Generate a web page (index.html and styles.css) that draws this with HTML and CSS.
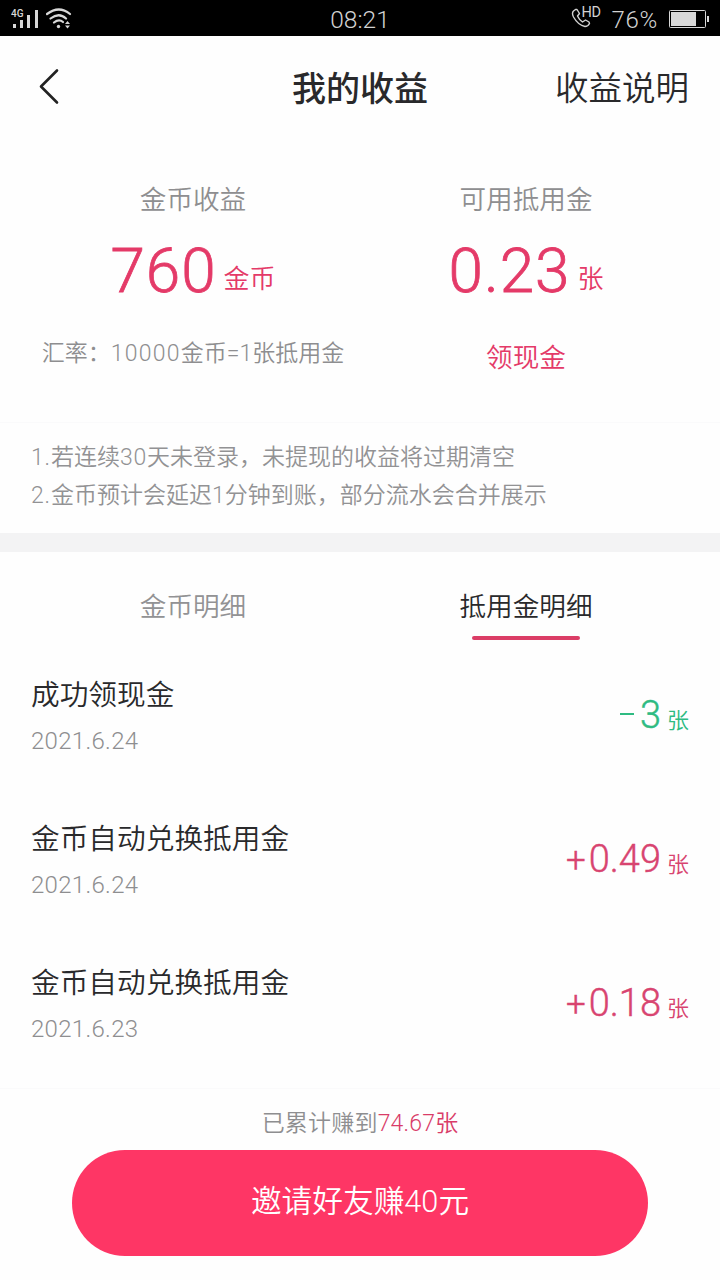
FILE: index.html
```html
<!DOCTYPE html>
<html lang="zh-CN">
<head>
<meta charset="utf-8">
<title>我的收益</title>
<link rel="stylesheet" href="styles.css">
</head>
<body>
<div class="status">
  <div class="status-left">
    <svg class="signal" width="28" height="22" viewBox="0 0 28 22"><text x="0" y="9" class="net">4G</text><path d="M2 16h3v4H2zM9 12h3v8H9zM16 7h3v13h-3zM24 2h3v18h-3z"/></svg>
    <svg width="26" height="22" viewBox="0 0 26 22"><g class="arcs"><path d="M1 6Q13-3 24 6M4.500 10.500Q13 4 20 10.500M8 14.500Q13 10.500 17 14"/></g><circle cx="12.500" cy="18.500" r="1.700"/><path d="M21.500 13l2.500 3h-5zM21.500 20.500l2.500-3h-5z"/></svg>
  </div>
  <div class="clock">08:21</div>
  <div class="status-right">
    <svg class="call" width="31" height="24" viewBox="0 0 31 24"><path d="M4.500 3.500L2.500 5Q.5 7 2.500 11Q7 19 14 20.500Q17 20.500 18.500 17.500L18 16L14.500 14L11.500 16Q8 13.500 6.500 10L8.500 7.500L6 3.500Z"/></svg>
    <span class="hd">HD</span>
    <span class="percent">76%</span>
    <svg width="40" height="20" viewBox="0 0 40 20"><rect class="shell" x=".5" y="1.500" width="36" height="17" rx="1"/><path d="M2 3h25v14H2zM38 7h2v6h-2z"/></svg>
  </div>
</div>
<header class="nav">
  <svg class="back" width="22" height="38" viewBox="0 0 22 38"><path d="M18 2.500L2 18.500L18 34.500"/></svg>
  <h1>我的收益</h1>
  <a class="explain">收益说明</a>
</header>
<section class="summary">
  <div class="stat">
    <div class="label">金币收益</div>
    <div class="value"><b>760</b><i>金币</i></div>
    <div class="rate">汇率：<span>10000</span>金币=1张抵用金</div>
  </div>
  <div class="stat">
    <div class="label">可用抵用金</div>
    <div class="value"><b>0.23</b><i>张</i></div>
    <div class="cash">领现金</div>
  </div>
</section>
<section class="notes">
  <p><span>1.</span>若连续<span>30</span>天未登录，未提现的收益将过期清空</p>
  <p><span>2.</span>金币预计会延迟1分钟到账，部分流水会合并展示</p>
</section>
<div class="band"></div>
<nav class="tabs">
  <div class="tab">金币明细</div>
  <div class="tab active">抵用金明细</div>
</nav>
<main class="list">
  <div class="row">
    <div><div class="name">成功领现金</div><div class="date">2021.6.24</div></div>
    <div class="amount out"><span class="minus"></span><b>3</b><i>张</i></div>
  </div>
  <div class="row">
    <div><div class="name">金币自动兑换抵用金</div><div class="date">2021.6.24</div></div>
    <div class="amount"><span class="sign">+</span><b>0.49</b><i>张</i></div>
  </div>
  <div class="row">
    <div><div class="name">金币自动兑换抵用金</div><div class="date">2021.6.23</div></div>
    <div class="amount"><span class="sign">+</span><b>0.18</b><i>张</i></div>
  </div>
</main>
<footer class="footer">
  <div class="total">已累计赚到<span>74.67张</span></div>
  <div class="invite">邀请好友赚<span>40</span>元</div>
</footer>
</body>
</html>
```
FILE: styles.css
```css
* { box-sizing: border-box; margin: 0; padding: 0; }
body {
  width: 720px;
  height: 1280px;
  overflow: hidden;
  display: flex;
  flex-direction: column;
  background: #fefefe;
  color: #29292b;
  font-family: Roboto, "Noto Sans CJK SC", sans-serif;
  font-weight: 350;
}
b, i { font-weight: 350; font-style: normal; }
.status {
  flex: none;
  height: 36px;
  background: #000;
  color: #d2d2d2;
  display: grid;
  grid-template-columns: 1fr auto 1fr;
  align-items: center;
  padding: 0 11px;
  font-size: 24px;
}
.status svg { fill: #d8d8d8; }
.status-left { display: flex; gap: 7px; padding-top: 1px; }
.net { font-size: 10px; font-weight: 500; }
.arcs { fill: none; stroke: #d8d8d8; stroke-width: 2.2; stroke-linecap: round; }
.clock { line-height: 34px; padding-top: 3px; font-size: 24.500px; }
.status-right { display: flex; justify-content: flex-end; align-items: center; }
.call { margin-top: -1px; }
.call path { fill: none; stroke: #d2d2d2; stroke-width: 1.4; stroke-linejoin: round; }
.hd { width: 20px; margin: -12px 0 0 -20px; font-size: 14.500px; line-height: 18px; font-weight: 400; letter-spacing: -.5px; }
.percent { margin: 2px 11px 0 10px; letter-spacing: .7px; }
.shell { fill: none; stroke: #d8d8d8; }
.nav {
  flex: none;
  height: 102px;
  display: grid;
  grid-template-columns: 1fr auto 1fr;
  align-items: center;
  padding: 0 31px 0 39px;
}
.nav h1 { font-size: 34px; line-height: 48px; font-weight: 500; margin: 3px 0 0 -8px; }
.back { fill: none; stroke: #222; stroke-width: 2.6; stroke-linecap: round; stroke-linejoin: round; }
.explain { justify-self: end; font-size: 33.500px; line-height: 48px; margin-top: 4px; }
.summary { flex: none; height: 284px; display: grid; grid-template-columns: 386px 280px; }
.stat { display: flex; flex-direction: column; align-items: center; padding-top: 42px; }
.label { height: 40px; line-height: 40px; font-size: 26.600px; color: #8e8e90; }
.value { height: 99px; display: flex; align-items: baseline; gap: 7px; color: #e43a68; }
.value b { font-size: 62px; line-height: 102px; letter-spacing: 1px; -webkit-text-stroke: .8px currentColor; }
.value i { font-size: 26px; line-height: 40px; position: relative; top: -4px; }
.rate { height: 70px; line-height: 70px; font-size: 23px; color: #8e8e90; }
.rate span { letter-spacing: 1.2px; }
.cash { height: 78px; line-height: 78px; font-size: 26.600px; color: #e43a68; }
.notes { flex: none; height: 111px; border-top: 1px solid #fafafb; padding: 16px 31px; font-size: 23px; line-height: 38px; color: #929294; white-space: nowrap; }
.notes span { letter-spacing: .8px; }
.band { flex: none; height: 19px; background: #f3f3f4; }
.tabs { flex: none; height: 88px; display: grid; grid-template-columns: 386px 280px; }
.tab { display: flex; flex-direction: column; align-items: center; gap: 8px; padding-top: 34px; font-size: 26.600px; line-height: 42px; color: #929294; }
.active { color: #29292b; }
.active::after { content: ""; width: 108px; height: 4px; border-radius: 2px; background: #db3d66; }
.row { height: 144px; padding: 35px 31px 0; display: flex; justify-content: space-between; }
.name { font-size: 28.700px; line-height: 40px; }
.date { font-size: 24px; line-height: 52px; letter-spacing: .3px; color: #8e8e90; }
.amount { display: flex; align-items: baseline; color: #d84470; }
.amount b { font-size: 38px; line-height: 80px; -webkit-text-stroke: .4px currentColor; }
.amount i { font-size: 22px; margin-left: 6px; }
.sign { font-size: 35px; margin-right: 3px; -webkit-text-stroke: .4px currentColor; }
.minus { width: 14px; height: 2px; margin-right: 6px; background: currentColor; align-self: flex-start; margin-top: 38px; }
.out { color: #2ebb82; }
.footer { flex: none; height: 192px; border-top: 1px solid #fafafb; display: flex; flex-direction: column; align-items: center; margin-top: 16px; padding-top: 10px; }
.total { height: 51px; font-size: 23px; line-height: 50px; letter-spacing: .2px; color: #8e8e90; }
.total span { color: #d93c68; }
.invite { flex: none; width: 576px; height: 106px; border-radius: 53px; background: #fe3665; color: #fff; text-align: center; font-size: 30.700px; line-height: 104px; }
```
